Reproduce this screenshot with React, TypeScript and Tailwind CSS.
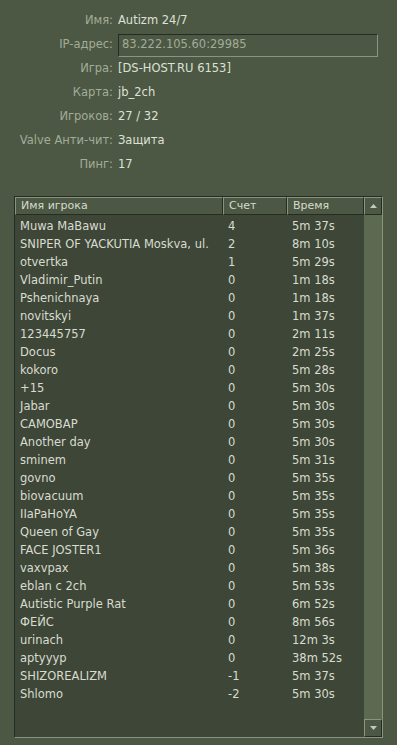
import React from 'react';

const info = [
  { label: 'Имя:', value: 'Autizm 24/7' },
  { label: 'IP-адрес:', value: '83.222.105.60:29985', box: true },
  { label: 'Игра:', value: '[DS-HOST.RU 6153]' },
  { label: 'Карта:', value: 'jb_2ch' },
  { label: 'Игроков:', value: '27 / 32' },
  { label: 'Valve Анти-чит:', value: 'Защита' },
  { label: 'Пинг:', value: '17' },
];

const players: [string, string, string][] = [
  ['Muwa MaBawu', '4', '5m 37s'],
  ['SNIPER OF YACKUTIA Moskva, ul.', '2', '8m 10s'],
  ['otvertka', '1', '5m 29s'],
  ['Vladimir_Putin', '0', '1m 18s'],
  ['Pshenichnaya', '0', '1m 18s'],
  ['novitskyi', '0', '1m 37s'],
  ['123445757', '0', '2m 11s'],
  ['Docus', '0', '2m 25s'],
  ['kokoro', '0', '5m 28s'],
  ['+15', '0', '5m 30s'],
  ['Jabar', '0', '5m 30s'],
  ['CAMOBAP', '0', '5m 30s'],
  ['Another day', '0', '5m 30s'],
  ['sminem', '0', '5m 31s'],
  ['govno', '0', '5m 35s'],
  ['biovacuum', '0', '5m 35s'],
  ['IIaPaHoYA', '0', '5m 35s'],
  ['Queen of Gay', '0', '5m 35s'],
  ['FACE JOSTER1', '0', '5m 36s'],
  ['vaxvpax', '0', '5m 38s'],
  ['eblan c 2ch', '0', '5m 53s'],
  ['Autistic Purple Rat', '0', '6m 52s'],
  ['ФЕЙС', '0', '8m 56s'],
  ['urinach', '0', '12m 3s'],
  ['aptyyyp', '0', '38m 52s'],
  ['SHIZOREALIZM', '-1', '5m 37s'],
  ['Shlomo', '-2', '5m 30s'],
];

function ArrowButton({ up }: { up?: boolean }) {
  return (
    <div className="h-[18px] w-[18px] flex items-center justify-center bg-[#4c5844] border-t border-l border-[#8a9480] border-b border-r border-b-[#262c22] border-r-[#262c22]">
      <svg width="7" height="4" viewBox="0 0 7 4">
        {up ? <polygon points="3.5,0 7,4 0,4" fill="#c3cab8" /> : <polygon points="0,0 7,0 3.5,4" fill="#c3cab8" />}
      </svg>
    </div>
  );
}

export default function App() {
  return (
    <div className="w-[397px] h-[745px] bg-[#4c5844] font-['DejaVu_Sans',sans-serif] text-[11.5px] overflow-hidden">
      {/* Server info */}
      <div className="flex flex-col pt-[9px]">
        {info.map((row) => (
          <div key={row.label} className="flex items-center h-6">
            <div className="w-[113px] text-right text-[#a3ac98]">{row.label}</div>
            <div className="ml-[5px] text-[#dde1d6]">
              {row.box ? (
                <div className="w-[260px] h-[23px] flex items-center pl-[3px] text-[#a3ac98] border border-t-[#262c22] border-l-[#262c22] border-b-[#8a9480] border-r-[#8a9480]">
                  {row.value}
                </div>
              ) : (
                row.value
              )}
            </div>
          </div>
        ))}
      </div>

      {/* Players table */}
      <div className="mt-[19px] ml-[14px] w-[369px] h-[542px] flex border border-t-[#262c22] border-l-[#262c22] border-b-[#8a9480] border-r-[#8a9480] bg-[#3e4637]">
        <div className="flex-1 flex flex-col">
          <div className="flex h-[18px] text-[11px] text-[#d6dbcd]">
            <div className="w-[208px] pl-[5px] flex items-center border-t border-l border-[#8a9480] border-b border-r border-b-[#262c22] border-r-[#262c22] bg-[#4c5844]">Имя игрока</div>
            <div className="w-[64px] pl-[5px] flex items-center border-t border-l border-[#8a9480] border-b border-r border-b-[#262c22] border-r-[#262c22] bg-[#4c5844]">Счет</div>
            <div className="flex-1 pl-[5px] flex items-center border-t border-l border-[#8a9480] border-b border-r border-b-[#262c22] border-r-[#262c22] bg-[#4c5844]">Время</div>
          </div>
          <div className="flex flex-col pt-[3px] text-[#d8dcd0]">
            {players.map(([name, score, time], i) => (
              <div key={i} className="flex h-[18px] items-center">
                <div className="w-[208px] pl-[5px] whitespace-nowrap overflow-hidden">{name}</div>
                <div className="w-[64px] pl-[5px]">{score}</div>
                <div className="flex-1 pl-[5px]">{time}</div>
              </div>
            ))}
          </div>
        </div>
        <div className="w-[18px] flex flex-col bg-[#5b6a51]">
          <ArrowButton up />
          <div className="flex-1" />
          <ArrowButton />
        </div>
      </div>
    </div>
  );
}
